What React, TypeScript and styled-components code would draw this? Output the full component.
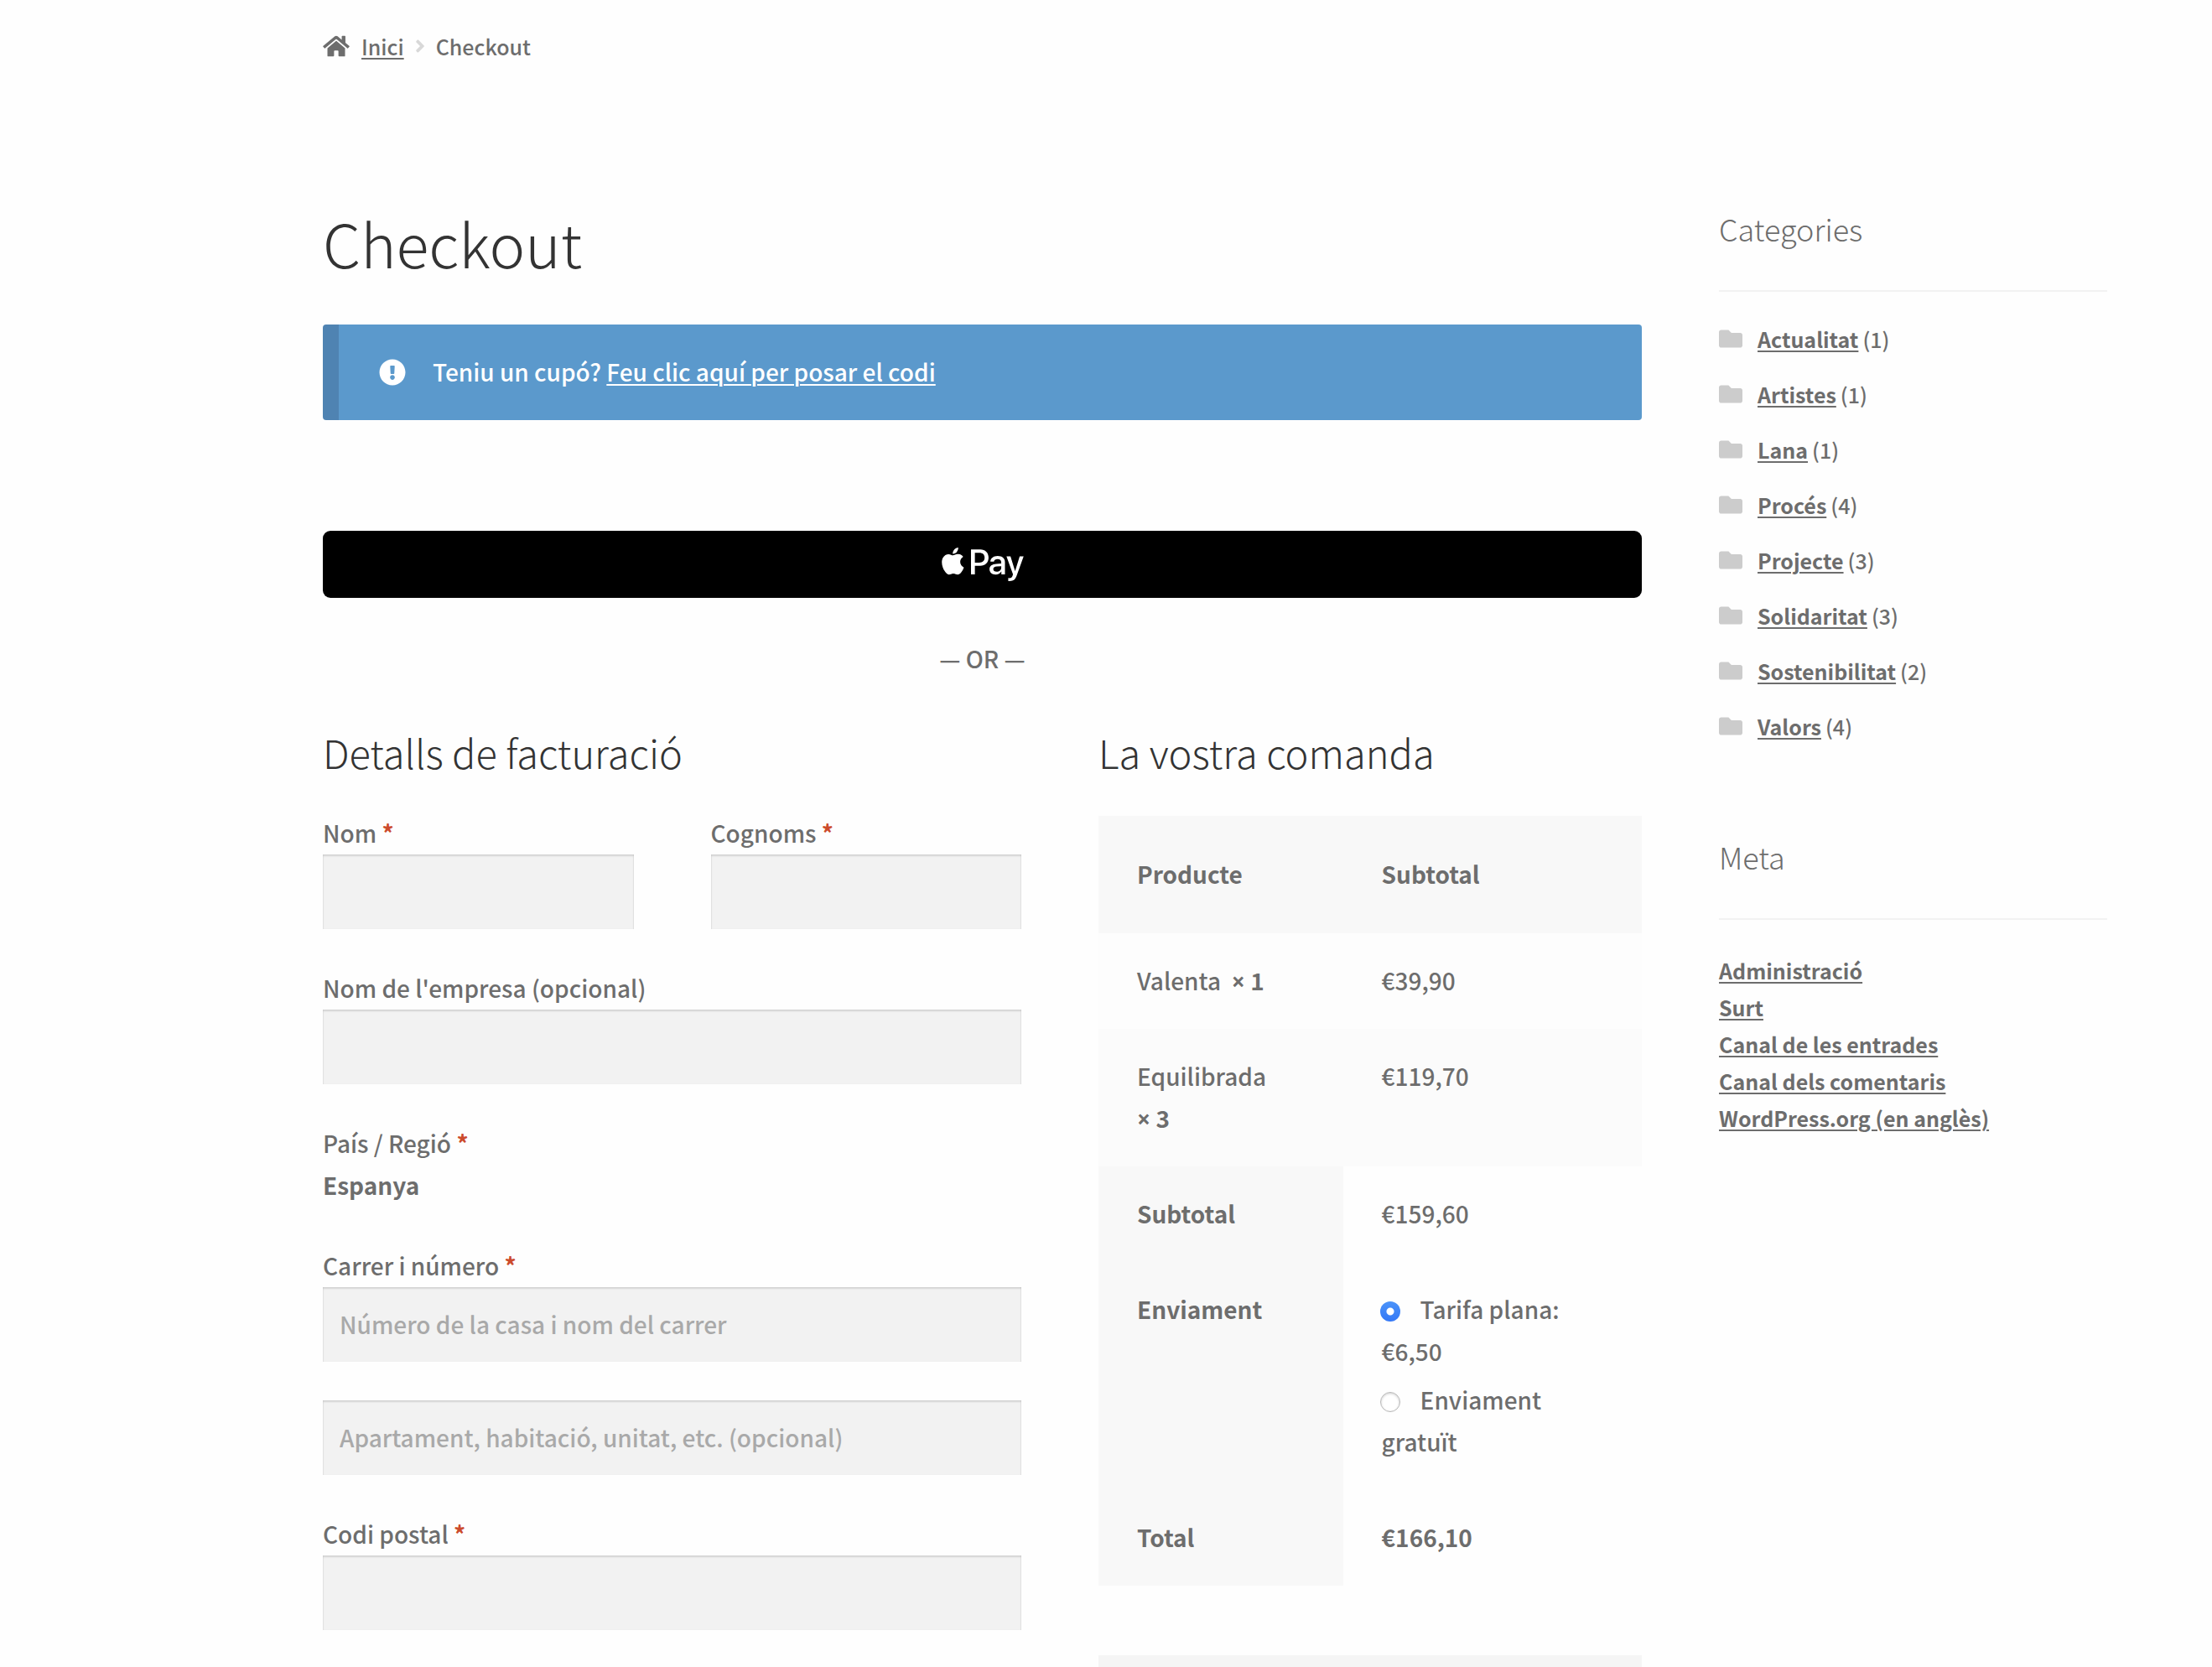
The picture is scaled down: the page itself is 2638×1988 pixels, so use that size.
import React, { useState } from "react";
import styled, { createGlobalStyle } from "styled-components";
import {
  FaAngleRight,
  FaApplePay,
  FaExclamationCircle,
  FaFolder,
  FaHome,
} from "react-icons/fa";

const GlobalStyle = createGlobalStyle`
  *, *::before, *::after { box-sizing: border-box; }
  body {
    margin: 0;
    background: #fefefe;
    color: #6d6d6d;
    font-family: "Noto Sans CJK SC", "Source Sans Pro", "Liberation Sans", sans-serif;
    font-size: 28px;
    font-weight: 500;
    line-height: 50px;
  }
  a {
    color: inherit;
    text-decoration: underline;
    text-decoration-thickness: 2px;
    text-underline-offset: 3px;
  }
  strong, th { font-weight: 700; }
`;

const Page = styled.div`
  padding: 33px 125px 0 385px;
`;

const Breadcrumb = styled.nav`
  display: flex;
  align-items: center;
  font-size: 25px;
  line-height: 44px;
  margin-bottom: 168px;
`;

const HomeIcon = styled(FaHome)`
  width: 32px;
  height: 28px;
  margin-right: 14px;
`;

const Separator = styled(FaAngleRight)`
  width: 20px;
  height: 24px;
  margin: 0 9px;
  color: #d8d8d8;
`;

const Columns = styled.div`
  display: grid;
  grid-template-columns: minmax(0, 1573fr) minmax(0, 463fr);
  column-gap: 92px;
  align-items: start;
`;

const Title = styled.h1`
  margin: 0 0 54px;
  color: #333;
  font-size: 72px;
  font-weight: 300;
  line-height: 88px;
`;

const Notice = styled.div`
  display: flex;
  align-items: center;
  padding: 32px 46px 32px 48px;
  border-left: 19px solid #4f83b2;
  border-radius: 4px;
  background: #5b99cc;
  color: #fff;
`;

const NoticeText = styled.p`
  margin: 0;
  padding-bottom: 2px;
  line-height: 48px;
`;

const NoticeIcon = styled(FaExclamationCircle)`
  width: 32px;
  height: 32px;
  margin-right: 32px;
`;

const PayButton = styled.button`
  display: flex;
  align-items: center;
  justify-content: center;
  width: 100%;
  height: 80px;
  margin: 132px 0 47px;
  padding: 0;
  border: 0;
  border-radius: 9px;
  background: #000;
  color: #fff;
`;

const PayLogo = styled(FaApplePay)`
  width: 98px;
  height: 78px;
`;

const Divider = styled.p`
  margin: 0 0 57px;
  text-align: center;
`;

const CheckoutGrid = styled.form`
  display: grid;
  grid-template-columns: minmax(0, 833fr) minmax(0, 648fr);
  column-gap: 92px;
  align-items: start;
`;

const SectionTitle = styled.h2<{ $gap: number }>`
  margin: 0 0 ${(p) => p.$gap}px;
  color: #333;
  font-size: 47px;
  font-weight: 300;
  line-height: 60px;
`;

const Fields = styled.div`
  display: flex;
  flex-direction: column;
  gap: 46px;
`;

const NameRow = styled.div`
  display: grid;
  grid-template-columns: 1fr 1fr;
  column-gap: 92px;
`;

const FieldBox = styled.div`
  display: flex;
  flex-direction: column;
`;

const Label = styled.label`
  padding-bottom: 2px;
  line-height: 48px;
`;

const Country = styled.strong`
  padding-bottom: 2px;
  line-height: 48px;
`;

const Required = styled.span`
  color: #cc4b2c;
  font-weight: 700;
`;

const TextInput = styled.input`
  width: 100%;
  height: 89px;
  padding: 0 20px 2px;
  border: 0;
  border-radius: 0;
  background: #f2f2f2;
  box-shadow: inset 0 2px 2px rgba(0, 0, 0, 0.125), inset 1px 0 1px rgba(0, 0, 0, 0.04),
    inset -1px 0 1px rgba(0, 0, 0, 0.04);
  color: #43454b;
  font: inherit;
  &::placeholder {
    color: #a9a9a9;
    opacity: 1;
  }
`;

const OrderTable = styled.table`
  width: 100%;
  margin-bottom: 83px;
  border-collapse: collapse;
  table-layout: fixed;
  text-align: left;
  th, td {
    padding: 31px 46px 33px;
    vertical-align: top;
  }
  th:first-child { width: 45%; }
  thead th {
    padding: 44px 46px 46px;
    background: #f8f8f8;
  }
  tbody td { background: #fdfdfd; }
  tbody tr:nth-child(2n) td { background: #fbfbfb; }
  tfoot th { background: #f8f8f8; }
`;

const Times = styled.span`
  font-family: "Noto Sans", "Open Sans", sans-serif;
  line-height: 1;
`;

const ShippingList = styled.ul`
  display: flex;
  flex-direction: column;
  gap: 8px;
  margin: 0;
  padding: 0;
  list-style: none;
`;

const Radio = styled.input`
  appearance: none;
  width: 24px;
  height: 24px;
  margin: 0 24px 0 -2px;
  border: 1px solid #b8b8b8;
  border-radius: 50%;
  background: #fff;
  box-shadow: inset 0 1px 3px rgba(0, 0, 0, 0.2);
  vertical-align: -3px;
  &:checked {
    border: 0;
    background: radial-gradient(circle, #fff 0 4px, transparent 5px),
      linear-gradient(#4b93f9, #3478f6);
    box-shadow: none;
  }
`;

const PaymentBox = styled.div`
  min-height: 14px;
  background: #f5f5f5;
`;

const Sidebar = styled.aside`
  font-size: 25px;
  line-height: 44px;
`;

const Widget = styled.section`
  margin-bottom: 106px;
`;

const WidgetTitle = styled.h2`
  margin: 0 0 34px;
  padding-bottom: 47px;
  border-bottom: 2px solid #f2f2f2;
  font-size: 36px;
  font-weight: 300;
  line-height: 54px;
`;

const CategoryList = styled.ul`
  display: flex;
  flex-direction: column;
  gap: 22px;
  margin: 0;
  padding: 0;
  list-style: none;
  li { display: flex; align-items: center; }
  a { font-weight: 700; margin-right: 5px; }
`;

const FolderIcon = styled(FaFolder)`
  width: 28px;
  height: 28px;
  margin-right: 18px;
  color: #ccc;
`;

const MetaList = styled.ul`
  margin: 0;
  padding: 4px 0 0;
  list-style: none;
  a { font-weight: 700; }
`;

type FieldProps = {
  id: string;
  label?: string;
  required?: boolean;
  placeholder?: string;
};

function Field({ id, label, required, placeholder }: FieldProps) {
  return (
    <FieldBox>
      {label && (
        <Label htmlFor={id}>
          {label} {required && <Required>*</Required>}
        </Label>
      )}
      <TextInput
        id={id}
        type="text"
        placeholder={placeholder}
        aria-label={label ? undefined : placeholder}
      />
    </FieldBox>
  );
}

const categories: [string, number][] = [
  ["Actualitat", 1],
  ["Artistes", 1],
  ["Lana", 1],
  ["Procés", 4],
  ["Projecte", 3],
  ["Solidaritat", 3],
  ["Sostenibilitat", 2],
  ["Valors", 4],
];

const metaLinks = [
  "Administració",
  "Surt",
  "Canal de les entrades",
  "Canal dels comentaris",
  "WordPress.org (en anglès)",
];

const items = [
  { name: "Valenta", quantity: 1, subtotal: "€39,90" },
  { name: "Equilibrada", quantity: 3, subtotal: "€119,70" },
];

const shippingMethods = [
  { id: "flat", label: "Tarifa plana: €6,50" },
  { id: "free", label: "Enviament gratuït" },
];

export default function App() {
  const [shipping, setShipping] = useState("flat");

  return (
    <>
      <GlobalStyle />
      <Page>
        <Breadcrumb>
          <HomeIcon />
          <a href="#">Inici</a>
          <Separator />
          <span>Checkout</span>
        </Breadcrumb>

        <Columns>
          <main>
            <Title>Checkout</Title>
            <Notice>
              <NoticeIcon />
              <NoticeText>
                Teniu un cupó? <a href="#">Feu clic aquí per posar el codi</a>
              </NoticeText>
            </Notice>
            <PayButton type="button" aria-label="Apple Pay">
              <PayLogo />
            </PayButton>
            <Divider>— OR —</Divider>

            <CheckoutGrid>
              <section>
                <SectionTitle $gap={42}>Detalls de facturació</SectionTitle>
                <Fields>
                  <NameRow>
                    <Field id="first-name" label="Nom" required />
                    <Field id="last-name" label="Cognoms" required />
                  </NameRow>
                  <Field id="company" label="Nom de l'empresa (opcional)" />
                  <FieldBox>
                    <Label as="span">
                      País / Regió <Required>*</Required>
                    </Label>
                    <Country>Espanya</Country>
                  </FieldBox>
                  <Field
                    id="address-1"
                    label="Carrer i número"
                    required
                    placeholder="Número de la casa i nom del carrer"
                  />
                  <Field
                    id="address-2"
                    placeholder="Apartament, habitació, unitat, etc. (opcional)"
                  />
                  <Field id="postcode" label="Codi postal" required />
                </Fields>
              </section>

              <section>
                <SectionTitle $gap={46}>La vostra comanda</SectionTitle>
                <OrderTable>
                  <thead>
                    <tr>
                      <th scope="col">Producte</th>
                      <th scope="col">Subtotal</th>
                    </tr>
                  </thead>
                  <tbody>
                    {items.map((item) => (
                      <tr key={item.name}>
                        <td>
                          {item.name}&nbsp;{" "}
                          <strong>
                            <Times>×</Times>&nbsp;{item.quantity}
                          </strong>
                        </td>
                        <td>{item.subtotal}</td>
                      </tr>
                    ))}
                  </tbody>
                  <tfoot>
                    <tr>
                      <th scope="row">Subtotal</th>
                      <td>€159,60</td>
                    </tr>
                    <tr>
                      <th scope="row">Enviament</th>
                      <td>
                        <ShippingList>
                          {shippingMethods.map((method) => (
                            <li key={method.id}>
                              <Radio
                                type="radio"
                                name="shipping"
                                id={method.id}
                                checked={shipping === method.id}
                                onChange={() => setShipping(method.id)}
                              />
                              <label htmlFor={method.id}>{method.label}</label>
                            </li>
                          ))}
                        </ShippingList>
                      </td>
                    </tr>
                    <tr>
                      <th scope="row">Total</th>
                      <td>
                        <strong>€166,10</strong>
                      </td>
                    </tr>
                  </tfoot>
                </OrderTable>
                <PaymentBox />
              </section>
            </CheckoutGrid>
          </main>

          <Sidebar>
            <Widget>
              <WidgetTitle>Categories</WidgetTitle>
              <CategoryList>
                {categories.map(([name, count]) => (
                  <li key={name}>
                    <FolderIcon />
                    <a href="#">{name}</a>
                    <span>({count})</span>
                  </li>
                ))}
              </CategoryList>
            </Widget>
            <Widget>
              <WidgetTitle>Meta</WidgetTitle>
              <MetaList>
                {metaLinks.map((link) => (
                  <li key={link}>
                    <a href="#">{link}</a>
                  </li>
                ))}
              </MetaList>
            </Widget>
          </Sidebar>
        </Columns>
      </Page>
    </>
  );
}
